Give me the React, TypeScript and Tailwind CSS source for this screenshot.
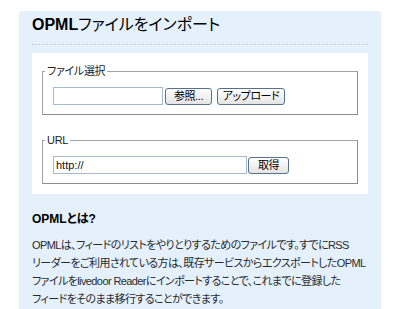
const font = "font-['Liberation_Sans','Noto_Sans_CJK_JP',sans-serif] [font-feature-settings:'palt']";

const Button = ({ label, className }: { label: string; className: string }) => (
  <button
    type="button"
    className={`h-[17px] rounded-[3px] border border-[#56708e] bg-gradient-to-b from-white to-[#e4e4e4] text-[11px] leading-[15px] tracking-[-0.4px] text-black ${className}`}
  >
    {label}
  </button>
);

const Fieldset = ({ legend, children, className = '' }: { legend: string; children: React.ReactNode; className?: string }) => (
  <fieldset className={`border border-[#a3a3a3] border-r-[#8c8c8c] border-b-[#8c8c8c] ${className}`}>
    <legend className="ml-[2px] px-[2px] text-[11px] leading-[14px] tracking-[-0.3px] text-[#222]">{legend}</legend>
    <div className="flex items-center pl-[10px] pt-[9px] pb-[9px]">{children}</div>
  </fieldset>
);

export default function App() {
  return (
    <div className={`h-[309px] overflow-hidden bg-white pt-[11px] pl-[19px] ${font}`}>
      <div className="w-[362px] rounded-t-[4px] bg-[#e4f0fc] px-[13px] pb-6">
        <h1 className="border-b border-dotted border-[#c4c9cf] pt-[4px] pb-[9px] text-[16px] leading-[20px] text-black">
          <span className="font-bold">OPML</span>ファイルをインポート
        </h1>

        <div className="mt-[8px] bg-white px-[10px] pt-[11px] pb-[10px]">
          <Fieldset legend="ファイル選択">
            <div className="h-[18px] w-[110px] border border-[#a7bbcf]" />
            <Button label="参照..." className="ml-[2px] w-[47px]" />
            <Button label="アップロード" className="ml-[5px] w-[68px]" />
          </Fieldset>

          <Fieldset legend="URL" className="mt-[18px]">
            <div className="flex h-[18px] w-[194px] items-center border border-[#a7bbcf] pl-[2px] text-[11px] text-[#111]">
              http://
            </div>
            <Button label="取得" className="ml-[1px] w-[41px]" />
          </Fieldset>
        </div>

        <h2 className="mt-[16px] text-[12px] font-bold leading-[18px] text-black">OPMLとは?</h2>
        <p className="mt-[8px] whitespace-nowrap text-[11px] leading-[18px] tracking-[-0.6px] text-[#2a2a2a]">
          OPMLは、フィードのリストをやりとりするためのファイルです。すでにRSS
          <br />
          リーダーをご利用されている方は、既存サービスからエクスポートしたOPML
          <br />
          ファイルをlivedoor Readerにインポートすることで、これまでに登録した
          <br />
          フィードをそのまま移行することができます。
        </p>
      </div>
    </div>
  );
}
